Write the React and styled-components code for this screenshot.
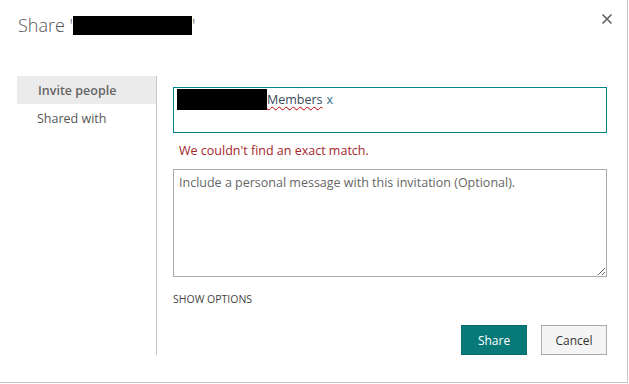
import React from 'react';
import styled, { createGlobalStyle } from 'styled-components';

const Global = createGlobalStyle`
	html, body {
		margin: 0;
		padding: 0;
		background: #fff;
	}
	body {
		font-family: 'Open Sans', 'Noto Sans', sans-serif;
	}
`;

const Dialog = styled.div`
	width: 627px;
	height: 382px;
	border-right: 1px solid #c6c6c6;
	border-bottom: 1px solid #c6c6c6;
	background: #fff;
`;

const Header = styled.div`
	display: flex;
	align-items: center;
	height: 50px;
	padding-left: 18px;
	padding-right: 14px;
	box-sizing: border-box;
`;

const Title = styled.h1`
	margin: 0;
	font-family: 'Open Sans', sans-serif;
	font-weight: 300;
	font-size: 18px;
	color: #555;
	display: flex;
	align-items: center;
	flex: 1;
`;

const Redacted = styled.span`
	display: inline-block;
	background: #000;
	width: ${(p) => p.w}px;
	height: ${(p) => p.h}px;
	margin-left: ${(p) => p.ml || 0}px;
	vertical-align: middle;
`;

const Close = styled.button`
	border: 0;
	background: none;
	padding: 0;
	width: 12px;
	height: 12px;
	cursor: pointer;
	display: flex;
	margin-top: -12px;
`;

const Body = styled.div`
	display: flex;
	margin-top: 26px;
	padding-left: 17px;
`;

const Nav = styled.nav`
	width: 139px;
	display: flex;
	flex-direction: column;
`;

const NavItem = styled.div`
	height: 28px;
	display: flex;
	align-items: center;
	padding-left: ${(p) => (p.active ? 21 : 20)}px;
	font-size: 12.5px;
	font-weight: ${(p) => (p.active ? 600 : 400)};
	color: ${(p) => (p.active ? '#666' : '#555')};
	background: ${(p) => (p.active ? '#ebebeb' : 'transparent')};
`;

const Content = styled.div`
	width: 434px;
	border-left: 1px solid #c6c6c6;
	padding-left: 16px;
	padding-top: 11px;
	display: flex;
	flex-direction: column;
`;

const PeopleBox = styled.div`
	height: 46px;
	box-sizing: border-box;
	border: 1px solid #038387;
	padding: 1px 3px;
	display: flex;
	align-items: flex-start;
	font-size: 12.5px;
	color: #444;
`;

const Token = styled.span`
	display: flex;
	align-items: center;
	height: 21px;
`;

const Misspelled = styled.span`
	text-decoration: underline wavy #c00000;
	text-decoration-thickness: 1px;
	text-underline-offset: 2px;
	color: #3a4a5a;
`;

const Remove = styled.span`
	color: #2b6e8a;
	margin-left: 4px;
`;

const ErrorText = styled.div`
	color: #a4262c;
	font-size: 12.5px;
	margin: 9px 0 0 6px;
	height: 18px;
	line-height: 18px;
`;

const Message = styled.textarea`
	margin-top: 9px;
	height: 108px;
	box-sizing: border-box;
	border: 1px solid #ababab;
	padding: 4px 5px;
	font-family: 'Open Sans', sans-serif;
	font-size: 12.5px;
	resize: vertical;
	outline: none;
	&::placeholder {
		color: #666;
	}
`;

const OptionsLink = styled.div`
	margin-top: 15px;
	font-size: 10.5px;
	color: #444;
	height: 14px;
	line-height: 14px;
`;

const Actions = styled.div`
	display: flex;
	justify-content: flex-end;
	gap: 14px;
	margin-top: 19px;
`;

const Button = styled.button`
	width: 66px;
	height: 30px;
	box-sizing: border-box;
	font-family: 'Open Sans', sans-serif;
	font-size: 12px;
	cursor: pointer;
	border: 1px solid ${(p) => (p.primary ? '#056b6b' : '#ababab')};
	background: ${(p) => (p.primary ? '#077979' : '#f4f4f4')};
	color: ${(p) => (p.primary ? '#fff' : '#333')};
`;

export default function App() {
	return (
		<>
			<Global />
			<Dialog>
				<Header>
					<Title>
						Share '<Redacted w={119} h={19} />'
					</Title>
					<Close aria-label="Close">
						<svg width="12" height="12" viewBox="0 0 12 12">
							<path d="M1.5 1.5L10.5 10.5M10.5 1.5L1.5 10.5" stroke="#666" strokeWidth="1.7" />
						</svg>
					</Close>
				</Header>
				<Body>
					<Nav>
						<NavItem active>Invite people</NavItem>
						<NavItem>Shared with</NavItem>
					</Nav>
					<Content>
						<PeopleBox>
							<Redacted w={90} h={21} />
							<Token>
								<Misspelled>Members</Misspelled>
								<Remove>x</Remove>
							</Token>
						</PeopleBox>
						<ErrorText>We couldn't find an exact match.</ErrorText>
						<Message placeholder="Include a personal message with this invitation (Optional)." />
						<OptionsLink>SHOW OPTIONS</OptionsLink>
						<Actions>
							<Button primary>Share</Button>
							<Button>Cancel</Button>
						</Actions>
					</Content>
				</Body>
			</Dialog>
		</>
	);
}
